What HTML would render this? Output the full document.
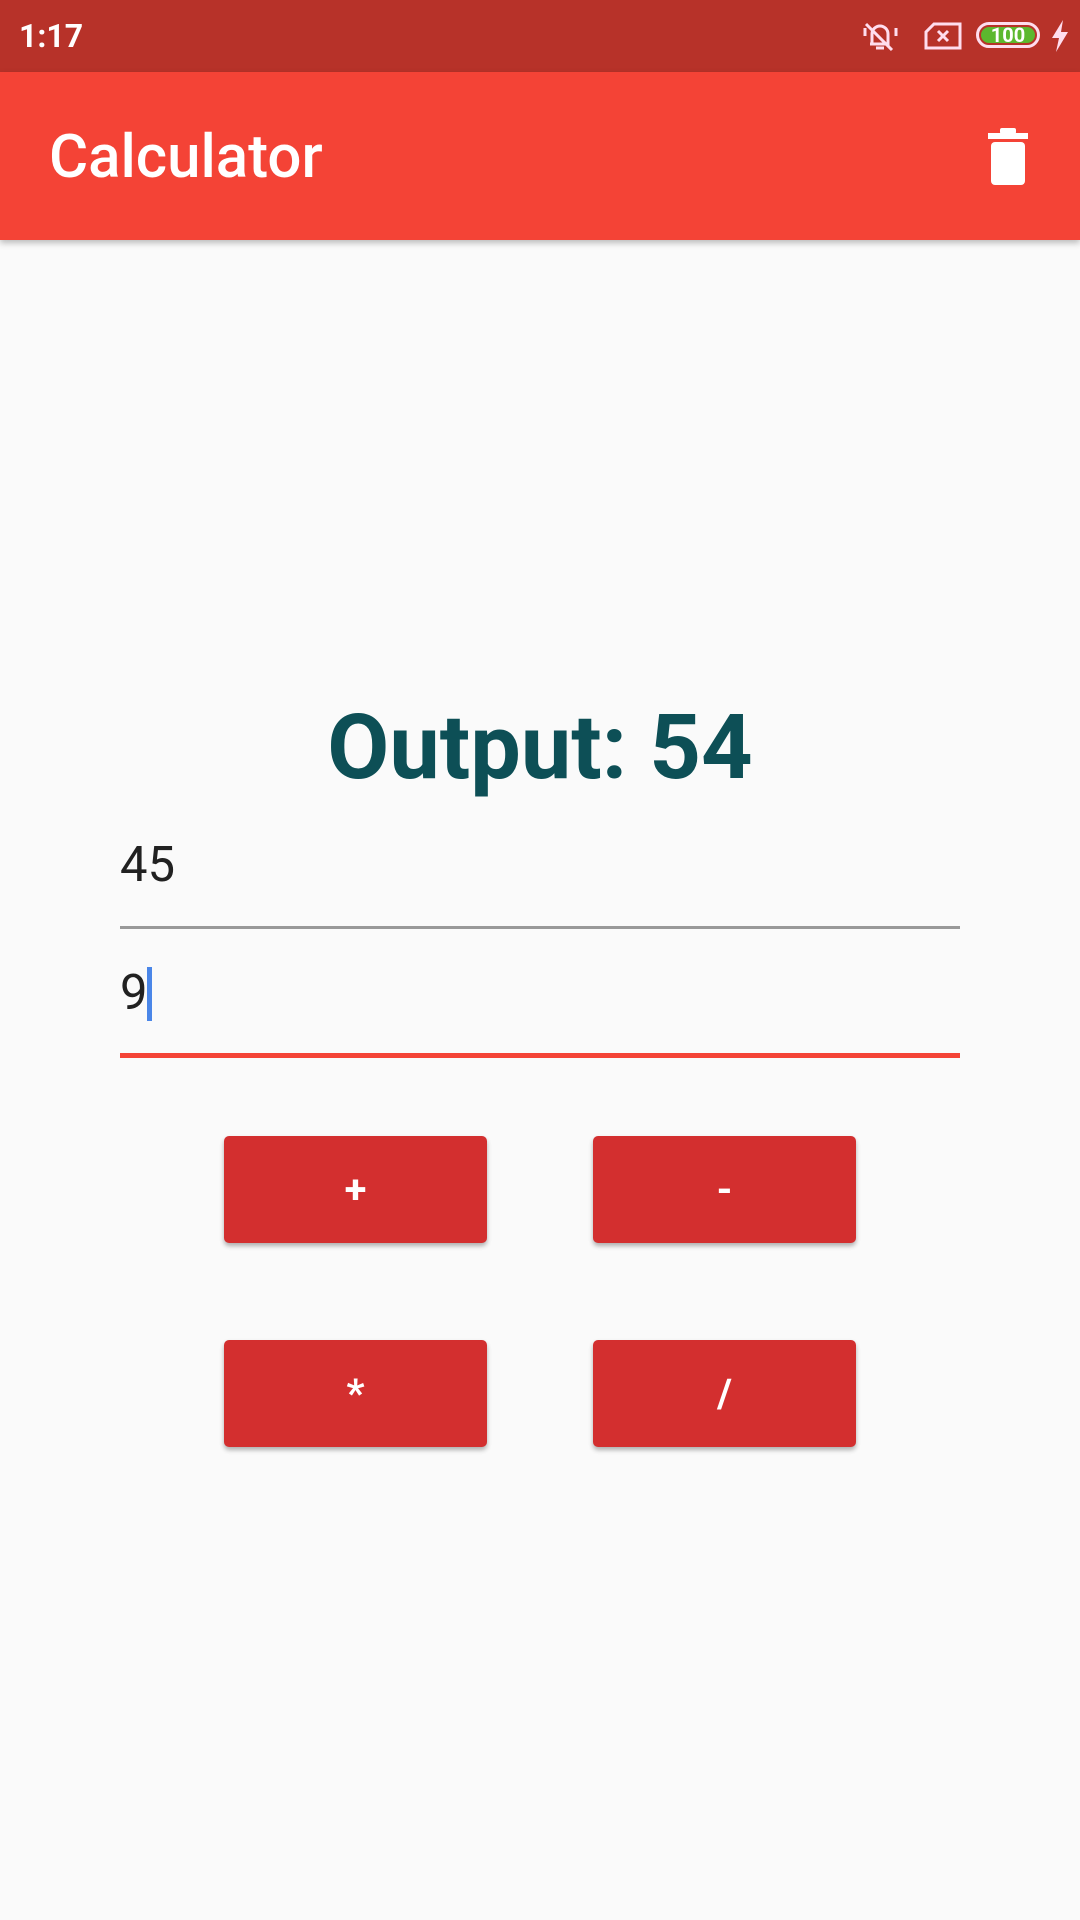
<!DOCTYPE html>
<html><head><meta charset="utf-8"><style>
*{margin:0;padding:0;box-sizing:border-box}
body{width:1080px;height:1920px;background:#FAFAFA;position:relative;overflow:hidden;font-family:"Roboto","Liberation Sans",sans-serif}
.sb{position:absolute;left:0;top:0;width:1080px;height:72px;background:#B73229}
.ab{position:absolute;left:0;top:72px;width:1080px;height:168px;background:#F44336;box-shadow:0 3px 6px rgba(0,0,0,.25)}
.t{position:absolute;color:#fff}
.btn{position:absolute;width:263px;height:107px;background:#D32F2F;border-radius:5px;box-shadow:0 3px 5px rgba(0,0,0,.3);color:#fff;font-weight:bold;font-size:40px;display:flex;align-items:center;justify-content:center}
</style></head><body>
<div class="sb"></div>
<div class="t" style="left:19px;top:17px;font-size:32px;font-weight:bold">1:17</div>
<svg style="position:absolute;left:862px;top:18px" width="40" height="36" viewBox="0 0 40 36" fill="none" stroke="#fde" stroke-width="3">
<path d="M10 26 V16 a8 8 0 0 1 16 0 V26 H8 M14 30 h8"/><path d="M4 6 L30 32"/><path d="M3 10v8M34 10v8"/></svg>
<svg style="position:absolute;left:924px;top:22px" width="38" height="28" viewBox="0 0 38 28" fill="none" stroke="#fde" stroke-width="3">
<path d="M10 2 H36 V26 H2 V10 Z"/><path d="M14 9 l10 10 M24 9 l-10 10"/></svg>
<div style="position:absolute;left:976px;top:22px;width:64px;height:26px;border:3px solid #fde;border-radius:13px;padding:2px">
<div style="width:100%;height:100%;background:#5CB82E;border-radius:9px;color:#fff;font-size:20px;font-weight:bold;line-height:16px;text-align:center">100</div></div>
<svg style="position:absolute;left:1050px;top:20px" width="20" height="32" viewBox="0 0 20 32"><path d="M13 0 L2 18 H9 L6 32 L18 12 H11 Z" fill="#fde"/></svg>
<div class="ab"></div>
<div class="t" style="left:49px;top:124px;font-size:60px;line-height:66px;font-weight:500">Calculator</div>
<svg style="position:absolute;left:986px;top:127px" width="44" height="58" viewBox="0 0 44 58"><rect x="2" y="6" width="40" height="6" fill="#fff"/><rect x="14" y="1" width="16" height="6" rx="2" fill="#fff"/><rect x="5" y="15" width="34" height="43" rx="4" fill="#fff"/></svg>
<div style="position:absolute;left:0;width:1080px;top:693px;text-align:center;font-size:90px;font-weight:bold;color:#0D4F56;line-height:110px">Output: 54</div>
<div style="position:absolute;left:120px;top:837px;font-size:49px;color:#212121;line-height:56px">45</div>
<div style="position:absolute;left:120px;top:926px;width:840px;height:3px;background:#999"></div>
<div style="position:absolute;left:120px;top:965px;font-size:49px;color:#212121;line-height:56px">9</div>
<div style="position:absolute;left:147px;top:967px;width:5px;height:54px;background:#4A86E8"></div>
<div style="position:absolute;left:120px;top:1053px;width:840px;height:5px;background:#F44336"></div>
<div class="btn" style="left:224px;top:1136px">+</div>
<div class="btn" style="left:593px;top:1136px">-</div>
<div class="btn" style="left:224px;top:1340px">*</div>
<div class="btn" style="left:593px;top:1340px">/</div>
</body></html>
